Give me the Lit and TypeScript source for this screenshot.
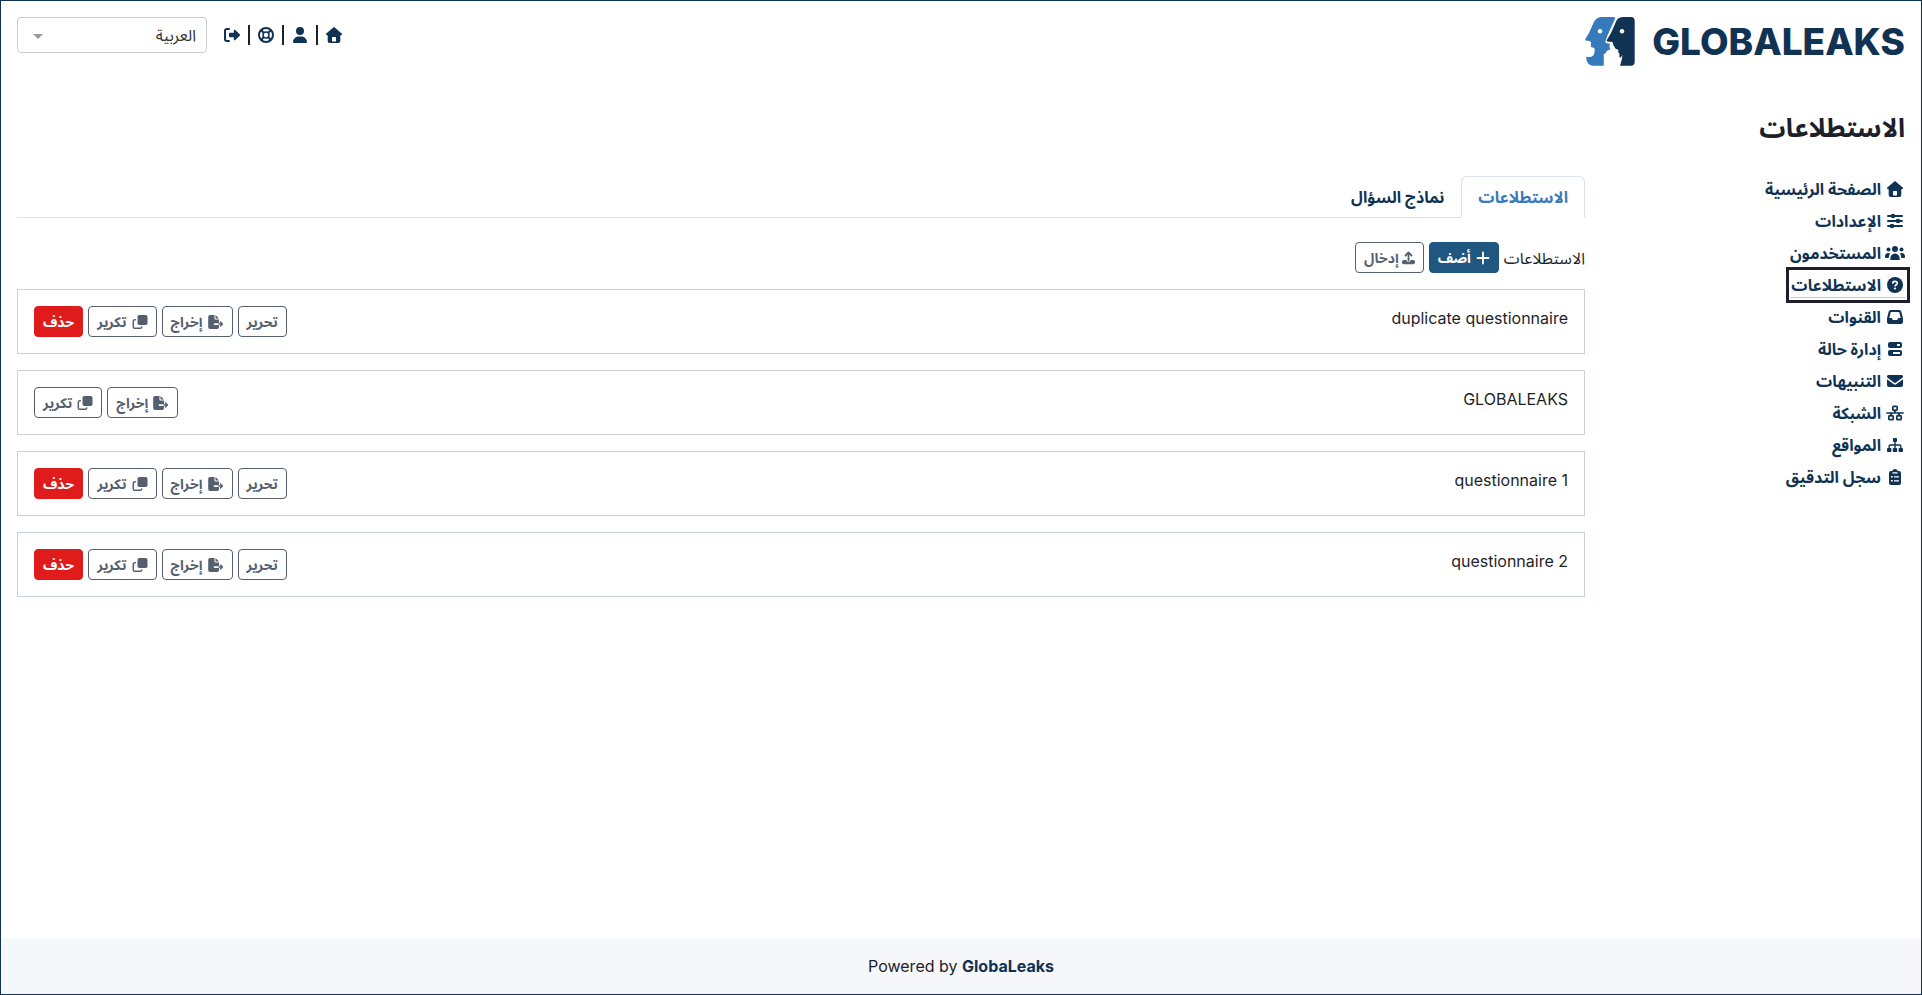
import { LitElement, html, svg, css, nothing, type SVGTemplateResult } from "lit";
import { customElement, property } from "lit/decorators.js";

type Icon = { box: string; body: SVGTemplateResult };

const icons: Record<string, Icon> = {
  house: {
    box: "0 0 16 16",
    body: svg`<path fill-rule="evenodd" d="M7.300.400a1 1 0 0 1 1.400 0l7 6.200c.6.6.2 1.600-.6 1.600h-.8v5.800a2 2 0 0 1-2 2H3.700a2 2 0 0 1-2-2V8.200H.9C.1 8.200-.3 7.200.3 6.600zM6 11v3c0 .3.200.5.500.5h3c.3 0 .5-.2.5-.5v-3c0-.6-.4-1-1-1H7c-.6 0-1 .4-1 1z"/>`,
  },
  user: {
    box: "-32 0 512 512",
    body: svg`<path d="M224 256A128 128 0 1 0 224 0a128 128 0 1 0 0 256zm-45.700 48C79.800 304 0 383.800 0 482.300C0 498.700 13.300 512 29.700 512H418.300c16.400 0 29.700-13.300 29.700-29.700C448 383.800 368.200 304 269.700 304H178.300z"/>`,
  },
  support: {
    box: "0 0 16 16",
    body: svg`<g fill="none" stroke="currentColor"><circle cx="8" cy="8" r="7" stroke-width="2"/><circle cx="8" cy="8" r="3" stroke-width="1.500"/><path stroke-width="2" d="M3 3l3 3M13 3l-3 3M3 13l3-3M13 13l-3-3"/></g>`,
  },
  logout: {
    box: "0 0 16 16",
    body: svg`<path fill="none" stroke="currentColor" stroke-width="2" stroke-linecap="round" d="M5 2H3a2 2 0 0 0-2 2v8a2 2 0 0 0 2 2h2"/><path d="M15.700 7.300 11.300 3c-.6-.6-1.500-.2-1.500.6v2.200H6a1 1 0 0 0-1 1v2.400a1 1 0 0 0 1 1h3.800v2.200c0 .8.9 1.200 1.500.6l4.400-4.300a1 1 0 0 0 0-1.400z"/>`,
  },
  sliders: {
    box: "0 0 16 16",
    body: svg`<path fill="none" stroke="currentColor" stroke-width="1.900" stroke-linecap="round" d="M1 3h14M1 8h14M1 13h14"/><circle cx="6" cy="3" r="2.300"/><circle cx="11" cy="8" r="2.300"/><circle cx="5" cy="13" r="2.300"/>`,
  },
  users: {
    box: "0 0 20 16",
    body: svg`<circle cx="10" cy="4" r="3"/><circle cx="3.500" cy="4.500" r="2"/><circle cx="16.500" cy="4.500" r="2"/><path d="M5.200 14.500c0-3.500 2-6 4.800-6s4.800 2.500 4.800 6c0 .3-.2.500-.5.500H5.700c-.3 0-.5-.2-.5-.5zM0 11.500C0 9.300 1.300 8 3.200 8c.8 0 1.400.2 1.900.5C4.300 9.700 3.800 11.300 3.700 13H1c-.6 0-1-.4-1-1zM20 11.500C20 9.300 18.700 8 16.800 8c-.8 0-1.400.2-1.900.5.800 1.200 1.300 2.800 1.400 4.500H19c.6 0 1-.4 1-1z"/>`,
  },
  question: {
    box: "0 0 16 16",
    body: svg`<circle cx="8" cy="8" r="8"/><path fill="none" stroke="#fff" stroke-width="1.600" stroke-linecap="round" d="M5.800 6.100c.1-1.200.9-1.700 2.200-1.700s2.300.7 2.300 1.800c0 1.300-1.600 1.500-2.200 2.600"/><circle cx="8" cy="11.500" r="1.100" fill="#fff"/>`,
  },
  inbox: {
    box: "0 0 16 16",
    body: svg`<path fill-rule="evenodd" d="M3.600 1h8.800a2 2 0 0 1 1.900 1.500L16 9.400V13a2 2 0 0 1-2 2H2a2 2 0 0 1-2-2V9.400l1.700-6.900A2 2 0 0 1 3.600 1zM3.800 3 2.300 9h2.500l1 2h4.400l1-2h2.500L12.200 3z"/>`,
  },
  server: {
    box: "0 0 16 16",
    body: svg`<path fill-rule="evenodd" d="M3 1h10a2 2 0 0 1 2 2v2a2 2 0 0 1-2 2H3a2 2 0 0 1-2-2V3a2 2 0 0 1 2-2zM10 3v2h3V3zM3 9h10a2 2 0 0 1 2 2v2a2 2 0 0 1-2 2H3a2 2 0 0 1-2-2v-2a2 2 0 0 1 2-2zM6 11v2h7v-2z"/>`,
  },
  envelope: {
    box: "0 0 16 16",
    body: svg`<path d="M1.500 2h13a1.500 1.500 0 0 1 .9 2.700L8.600 9.800a1 1 0 0 1-1.200 0L.6 4.700A1.500 1.500 0 0 1 1.500 2zM0 6.200V12a2 2 0 0 0 2 2h12a2 2 0 0 0 2-2V6.200L9.200 11.300a2 2 0 0 1-2.400 0z"/>`,
  },
  network: {
    box: "0 0 18 16",
    body: svg`<g fill="none" stroke="currentColor" stroke-width="1.700"><rect x="6.800" y="1.300" width="4.400" height="4" rx="1"/><rect x="2.800" y="10.700" width="4.400" height="4" rx="1"/><rect x="10.800" y="10.700" width="4.400" height="4" rx="1"/><path stroke-linecap="round" d="M1 8h16M9 5.300V8M5 8v2.700M13 8v2.700"/></g>`,
  },
  sitemap: {
    box: "0 0 16 16",
    body: svg`<rect x="6" y="1" width="4" height="4" rx=".8"/><rect x="0" y="11" width="4.400" height="4" rx=".8"/><rect x="5.800" y="11" width="4.400" height="4" rx=".8"/><rect x="11.600" y="11" width="4.400" height="4" rx=".8"/><path fill="none" stroke="currentColor" stroke-width="1.400" d="M8 5v6M2.200 11V9a1 1 0 0 1 1-1h9.600a1 1 0 0 1 1 1v2"/>`,
  },
  clipboard: {
    box: "0 0 16 16",
    body: svg`<path fill-rule="evenodd" d="M8 0a3 3 0 0 1 2.800 2H12a2 2 0 0 1 2 2v10a2 2 0 0 1-2 2H4a2 2 0 0 1-2-2V4a2 2 0 0 1 2-2h1.200A3 3 0 0 1 8 0zM5.500 3.200v1.200h5V3.200zM4 7v1.600h1.800V7zM7 7.200v1.200h5V7.200zM4 11v1.600h1.800V11zM7 11.200v1.200h5v-1.200z"/>`,
  },
  plus: {
    box: "0 0 14 14",
    body: svg`<path fill="none" stroke="currentColor" stroke-width="1.800" stroke-linecap="round" d="M7 1.500v11M1.500 7h11"/>`,
  },
  upload: {
    box: "0 0 13 14",
    body: svg`<path fill="none" stroke="currentColor" stroke-width="1.800" stroke-linecap="round" stroke-linejoin="round" d="M6.500 9.500V2M3.500 4.500l3-3 3 3"/><path d="M1.700 9H4.500a2 2 0 0 0 4 0h2.800A1.700 1.700 0 0 1 13 10.700v.8a1.700 1.700 0 0 1-1.700 1.700H1.700A1.700 1.700 0 0 1 0 11.500v-.8A1.700 1.700 0 0 1 1.700 9z"/>`,
  },
  fileExport: {
    box: "0 0 16 14",
    body: svg`<path d="M2 0h4.500v3.500c0 .5.400 1 1 1H11v3.700H6.500a.8.800 0 0 0 0 1.700H11v2.300A1.800 1.800 0 0 1 9.200 14H2a1.800 1.800 0 0 1-1.800-1.800V1.800A1.800 1.800 0 0 1 2 0zM7.500 0 11 3.500H7.500z"/><path fill="none" stroke="currentColor" stroke-width="1.400" stroke-linecap="round" stroke-linejoin="round" d="M11 9h3.500M12.500 7l2 2-2 2"/>`,
  },
  copy: {
    box: "0 0 16 14",
    body: svg`<rect x="5.500" y="0" width="10" height="10" rx="1.800"/><path fill="none" stroke="currentColor" stroke-width="1.500" stroke-linecap="round" d="M3.300 4.800H2.600A1.300 1.300 0 0 0 1.300 6.100v5.800a1.300 1.300 0 0 0 1.300 1.300h5.800a1.300 1.300 0 0 0 1.300-1.300"/>`,
  },
};

@customElement("app-icon")
export class AppIcon extends LitElement {
  @property() name = "";
  static styles = css`
    :host { display: inline-flex; flex: none; }
    svg { display: block; height: var(--icon-size, 16px); width: auto; fill: currentColor; }
  `;
  render() {
    const icon = icons[this.name];
    return icon ? html`<svg viewBox=${icon.box} aria-hidden="true">${icon.body}</svg>` : nothing;
  }
}

const navItems = [
  { icon: "house", label: "الصفحة الرئيسية" },
  { icon: "sliders", label: "الإعدادات" },
  { icon: "users", label: "المستخدمون" },
  { icon: "question", label: "الاستطلاعات", active: true },
  { icon: "inbox", label: "القنوات" },
  { icon: "server", label: "إدارة حالة" },
  { icon: "envelope", label: "التنبيهات" },
  { icon: "network", label: "الشبكة" },
  { icon: "sitemap", label: "المواقع" },
  { icon: "clipboard", label: "سجل التدقيق" },
];

const questionnaires = [
  { name: "duplicate questionnaire", editable: true },
  { name: "GLOBALEAKS", editable: false },
  { name: "questionnaire 1", editable: true },
  { name: "questionnaire 2", editable: true },
];

const shortcuts = [
  { icon: "house", label: "الصفحة الرئيسية" },
  { icon: "user", label: "التفضيلات" },
  { icon: "support", label: "الدعم" },
  { icon: "logout", label: "خروج" },
];

@customElement("app-root")
export class AppRoot extends LitElement {
  static styles = css`
    * { box-sizing: border-box; }
    :host {
      --navy: #103253;
      --ink: #1d1f2a;
      --line: #c8d1e0;
      display: flex;
      flex-direction: column;
      min-height: 100vh;
      box-sizing: border-box;
      border: 1px solid var(--navy);
      background: #fff;
      color: var(--ink);
      font: 16px/24px Inter, "Noto Sans Arabic", "Noto Sans", sans-serif;
    }
    a { color: var(--navy); text-decoration: none; font-weight: 700; }
    header {
      display: flex;
      justify-content: space-between;
      align-items: flex-start;
      padding: 16px;
    }
    .brand { display: flex; align-items: center; gap: 17px; direction: ltr; }
    .brand svg { display: block; width: 50px; height: 49px; }
    .wordmark { font-size: 37px; line-height: 48px; font-weight: 800; }
    .tools { display: flex; align-items: flex-start; gap: 17px; }
    .shortcuts { display: flex; align-items: center; height: 35px; gap: 8px; }
    .shortcuts a { display: block; }
    .shortcuts app-icon { display: flex; }
    .divider { width: 2px; height: 20px; background: var(--ink); }
    .language { position: relative; display: flex; width: 190px; }
    .language select {
      appearance: none;
      width: 100%;
      height: 36px;
      padding: 0 10px;
      border: 1px solid #ccc;
      border-radius: 4px;
      background: #fff;
      color: #333;
      font: inherit;
    }
    .caret {
      position: absolute;
      left: 16px;
      top: 17px;
      border: 5px solid transparent;
      border-top-color: #999;
      border-bottom: 0;
      pointer-events: none;
    }
    h1 { margin: 0; padding: 26px 16px 24px; font-size: 26px; line-height: 40px; font-weight: 700; }
    .columns { display: grid; grid-template-columns: 1fr 5fr; flex: 1; align-content: start; }
    nav ul { list-style: none; margin: 0; padding: 1px 16px; }
    nav li { display: flex; height: 32px; align-items: center; }
    nav a { display: flex; align-items: center; gap: 4px; height: 26px; border-bottom: 1px solid transparent; }
    nav app-icon { width: 20px; justify-content: center; }
    nav a.active { border-bottom-color: #b9cbdd; outline: 3px solid var(--ink); outline-offset: 2px; }
    main { padding: 4px 16px 0; min-width: 0; }
    .tabs { display: flex; border-bottom: 1px solid #dbe2ee; margin-bottom: 24px; }
    .tabs button {
      padding: 8px 16px;
      margin-bottom: -1px;
      border: 1px solid transparent;
      border-radius: 6px 6px 0 0;
      background: none;
      color: var(--navy);
      font: inherit;
      font-weight: 700;
    }
    .tabs .current { background: #fff; color: #377abc; border-color: #dbe2ee #dbe2ee #fff; }
    .row { display: flex; align-items: center; gap: 5px; margin-bottom: 16px; }
    .btn {
      display: inline-flex;
      align-items: center;
      gap: 5px;
      height: 31px;
      padding: 0 8px;
      border: 1px solid #565f70;
      border-radius: 4px;
      background: #fff;
      color: #565f70;
      font: inherit;
      font-size: 14px;
      line-height: 21px;
      font-weight: 700;
      --icon-size: 14px;
    }
    .tight { gap: 3px; }
    .primary { background: #205781; border-color: #205781; color: #fff; }
    .danger { background: #df1b1b; border-color: #df1b1b; color: #fff; }
    .card {
      display: flex;
      justify-content: space-between;
      align-items: flex-start;
      padding: 16px;
      margin-bottom: 16px;
      border: 1px solid var(--line);
    }
    .actions { display: flex; gap: 5px; }
    footer { padding: 16px; text-align: center; direction: ltr; background: #f5f7fb; }
  `;

  private renderCard(q: { name: string; editable: boolean }) {
    return html`<section class="card">
      <span dir="ltr">${q.name}</span>
      <div class="actions">
        ${q.editable ? html`<button class="btn">تحرير</button>` : nothing}
        <button class="btn"><app-icon name="fileExport"></app-icon>إخراج</button>
        <button class="btn"><app-icon name="copy"></app-icon>تكرير</button>
        ${q.editable ? html`<button class="btn danger">حذف</button>` : nothing}
      </div>
    </section>`;
  }

  connectedCallback() {
    super.connectedCallback();
    this.dir = "rtl";
    this.lang = "ar";
  }

  render() {
    return html`
      <header>
        <a class="brand" href="#">
          <svg viewBox="0 0 50 49" aria-hidden="true">
            <path fill="#377abc" d="M17 0H28.500C30 0 30.500 1 29.800 2.200L22.500 18.500 20.500 24C20.200 25.200 21 26 22 26.200L24.800 26.700 24.500 30 25.200 32.500 22 33.700 20.500 36.200 18.800 37V48.700H8C4 48.700 1.200 45.500 1.200 39.800 5 40.500 8.500 39.500 9 37.200L9.800 33 9.300 31 5.800 30 6.200 28 5.500 27.300 6.200 25.700 4.800 24 .5 23.500C-.3 23 .2 22 .8 21.200L4 16 8.200 6.500C10 2.500 12.500 0 17 0z"/>
            <path fill="#103253" d="M38.500 0H46C48.300 0 49.700 1.500 49.700 4V44.700C49.700 47.500 48.300 48.700 46 48.700H35L36.500 43.500 37.500 38 35.800 40.500 34.500 40.200 34.300 36 33 35.300 33.500 33 30.300 31.500 28.200 27.500 27.500 25 22.500 24.500C21.500 24.300 21.500 23.500 22 22.700L26 16 31.300 4C32.500 1.500 35 0 38.500 0z"/>
            <circle cx="15" cy="14.300" r="2.200" fill="#fff"/><circle cx="37" cy="14.300" r="2.200" fill="#fff"/>
          </svg>
          <span class="wordmark">GLOBALEAKS</span>
        </a>
        <div class="tools">
          <div class="shortcuts">
            ${shortcuts.map(
              (s, i) => html`${i ? html`<span class="divider"></span>` : nothing}<a href="#" aria-label=${s.label}><app-icon name=${s.icon}></app-icon></a>`,
            )}
          </div>
          <div class="language">
            <select aria-label="اللغة"><option>العربية</option></select>
            <span class="caret"></span>
          </div>
        </div>
      </header>
      <h1>الاستطلاعات</h1>
      <div class="columns">
        <nav>
          <ul>
            ${navItems.map(
              (n) => html`<li><a href="#" class=${n.active ? "active" : ""}><app-icon name=${n.icon}></app-icon><span>${n.label}</span></a></li>`,
            )}
          </ul>
        </nav>
        <main>
          <div class="tabs" role="tablist">
            <button class="current" role="tab" aria-selected="true">الاستطلاعات</button>
            <button role="tab" aria-selected="false">نماذج السؤال</button>
          </div>
          <div class="row">
            <span>الاستطلاعات</span>
            <button class="btn primary"><app-icon name="plus"></app-icon>أضف</button>
            <button class="btn tight"><app-icon name="upload"></app-icon>إدخال</button>
          </div>
          ${questionnaires.map((q) => this.renderCard(q))}
        </main>
      </div>
      <footer>Powered by <a href="#">GlobaLeaks</a></footer>
    `;
  }
}
